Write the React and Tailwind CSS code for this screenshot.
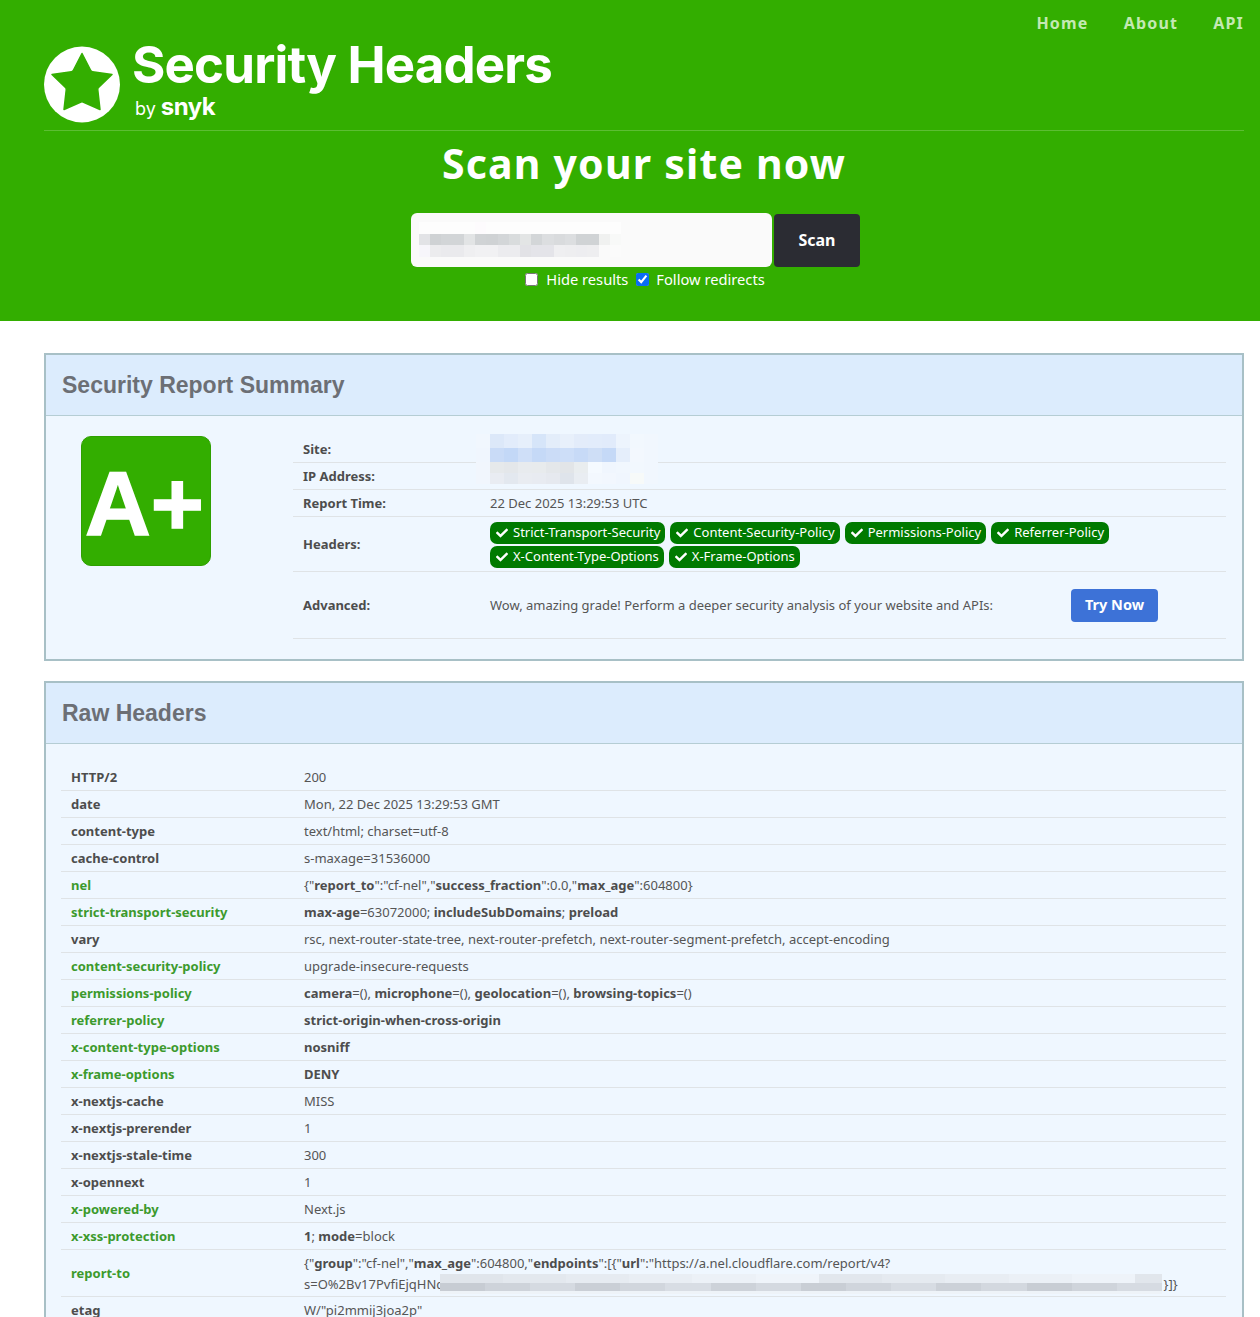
import { FaCheck } from "react-icons/fa";

const noto = "font-['Noto_Sans','Liberation_Sans',sans-serif]";

const badges = [
  "Strict-Transport-Security",
  "Content-Security-Policy",
  "Permissions-Policy",
  "Referrer-Policy",
  "X-Content-Type-Options",
  "X-Frame-Options",
];

// pixelated blur blocks over redacted values
const inputBlur = [
  ["#fdfdfd", "#fdfdfd", "#fdfdfd", "#fdfdfd", "#fdfdfd", "#fdfbfd", "#fdfdfd", "#fdfdfd", "#fdfdfd", "#fdfdfd", "#fdfdfd", "#fdfdfd", "#fdfdfd", "#fdfdfd", "#fdfdfd", "#fdfdfd", "#fdfdfd", "#fdfdfd"],
  ["#e2e3e6", "#cfd2d4", "#d2d5d7", "#d2d5d7", "#e2e4e5", "#d0d3d5", "#cfd2d4", "#d3d6d8", "#d9dcdd", "#e3e5e5", "#d3d6d8", "#dcdee0", "#d9dbdd", "#dcdee0", "#d0d3d5", "#d0d3d5", "#f0f1f0", "#f8f9f8"],
  ["#f7f6fb", "#ececee", "#eaeaed", "#eaeaed", "#efeff1", "#f1f1f3", "#f1f1f3", "#ececef", "#ececef", "#e2e2e6", "#e4e4e9", "#e4e4e9", "#efeff1", "#eeeef0", "#ededf0", "#eeeef0", "#fafafa", "#fbfbfb"],
];

const siteBlur = [
  ["#f1f7fe", "#dce8f9", "#e2ecfb", "#e6effb", "#d6e5f9", "#e3edfa", "#e8f0fb", "#e3ecfa", "#e2ecfb", "#e1ebfb", "#edf4fd", "#f2f8fe", "#f1f7fe"],
  ["#f0f6fe", "#c9dbf7", "#c3d8f7", "#cfdff8", "#c5d9f7", "#cbdcf7", "#cddef8", "#c7daf7", "#cedef6", "#c5d9f7", "#e5eefb", "#f3f8fe", "#f1f7fe"],
  ["#f1f6fd", "#e6e9eb", "#e4e7ea", "#e8ebee", "#e8ebed", "#e4e7ea", "#e2e5e8", "#e9edef", "#f5faff", "#f0f6fe", "#f1f7fe", "#f2f8fe", "#f1f7fe"],
  ["#f1f6fd", "#e9ecf2", "#e3e8ef", "#e9ecf1", "#e8ebf1", "#e6e9ef", "#dfe4eb", "#e9edf2", "#f3f8fe", "#f2f7fe", "#f0f6fe", "#f7faf9", "#f1f7fe"],
];

// long blurred token in report-to, 9px blocks
const reportBlur = Array.from({ length: 80 }, (_, i) => {
  const a = (i * 37 + (i % 7) * 11) % 16;
  const b = (i * 23 + (i % 5) * 13) % 18;
  return [
    `rgb(${224 + a}, ${229 + a}, ${235 + a})`,
    `rgb(${199 + b}, ${204 + b}, ${211 + b})`,
    "rgb(238, 243, 248)",
  ];
});

const B = ({ children }) => <b className="font-bold text-[#4d4d4d]">{children}</b>;

const rawHeaders = [
  ["HTTP/2", "200"],
  ["date", "Mon, 22 Dec 2025 13:29:53 GMT"],
  ["content-type", "text/html; charset=utf-8"],
  ["cache-control", "s-maxage=31536000"],
  ["nel", <>{'{"'}<B>report_to</B>{'":"cf-nel","'}<B>success_fraction</B>{'":0.0,"'}<B>max_age</B>{'":604800}'}</>, true],
  ["strict-transport-security", <><B>max-age</B>=63072000; <B>includeSubDomains</B>; <B>preload</B></>, true],
  ["vary", "rsc, next-router-state-tree, next-router-prefetch, next-router-segment-prefetch, accept-encoding"],
  ["content-security-policy", "upgrade-insecure-requests", true],
  ["permissions-policy", <><B>camera</B>=(), <B>microphone</B>=(), <B>geolocation</B>=(), <B>browsing-topics</B>=()</>, true],
  ["referrer-policy", <B>strict-origin-when-cross-origin</B>, true],
  ["x-content-type-options", <B>nosniff</B>, true],
  ["x-frame-options", <B>DENY</B>, true],
  ["x-nextjs-cache", "MISS"],
  ["x-nextjs-prerender", "1"],
  ["x-nextjs-stale-time", "300"],
  ["x-opennext", "1"],
  ["x-powered-by", "Next.js", true],
  ["x-xss-protection", <><B>1</B>; <B>mode</B>=block</>, true],
];

const Pixels = ({ rows, heights, className }) => (
  <div className={className}>
    {rows.map((row, i) => (
      <div key={i} className="flex flex-1" style={heights ? { flexGrow: heights[i] } : undefined}>
        {row.map((c, j) => (
          <div key={j} className="flex-1" style={{ backgroundColor: c }} />
        ))}
      </div>
    ))}
  </div>
);

const Panel = ({ title, children }) => (
  <section className="border-2 border-[#a8c0c6] bg-[#eff7ff]">
    <h2 className="h-[61px] bg-[#dcecfd] border-b border-[#b5cdd4] pl-4 flex items-center text-[23px] font-bold text-[#6c6f75] font-['Liberation_Sans',sans-serif]">
      {title}
    </h2>
    {children}
  </section>
);

const SummaryRow = ({ label, children, className = "h-[27px]" }) => (
  <div className={`flex items-center pt-[2px] border-b border-[#dfe3e6] ${className}`}>
    <div className="w-[197px] pl-[10px] font-bold text-[#4d4d4d]">{label}</div>
    <div className="flex-1">{children}</div>
  </div>
);

const HeaderRow = ({ name, ok, className = "h-[27px] pt-[2px]", children }) => (
  <div className={`flex items-center border-b border-[#dfe3e6] ${className}`}>
    <div className={`w-[243px] pl-[10px] font-bold ${ok ? "text-[#3c9a2d]" : "text-[#4d4d4d]"}`}>{name}</div>
    <div className="flex-1">{children}</div>
  </div>
);

export default function App() {
  return (
    <div className={`${noto} bg-white text-[13px] text-[#555] h-[1317px] overflow-hidden`}>
      <header className="h-[321px] bg-[#33ae00] pl-[44px] pr-[16px] relative">
        <nav className="absolute top-[11px] right-[16px] flex gap-[35px] text-[16px] font-bold tracking-[1.2px] text-[#c4e9b3]">
          <span>Home</span>
          <span>About</span>
          <span>API</span>
        </nav>
        <div className="h-[131px] border-b border-[#5cbe33] flex items-start pt-[46px]">
          <svg viewBox="0 0 76 76" className="w-[76px] h-[77px]">
            <circle cx="38" cy="38" r="38" fill="#fff" />
            <path
              d="M38 7 L46.500 23.500 Q47 25 48.500 25.200 L68 28 L54.500 41 Q53.500 42 53.800 43.500 L56 63 L39 55.500 Q38 55 37 55.500 L20 63 L22.200 43.500 Q22.500 42 21.500 41 L8 28 L27.500 25.200 Q29 25 29.500 23.500 Z"
              fill="#33ae00"
              stroke="#33ae00"
              strokeWidth="1.500"
              strokeLinejoin="round"
            />
          </svg>
          <div className="ml-[12px] -mt-[9px] text-white font-['Inter',sans-serif]">
            <div className="text-[51px] leading-[56px] font-bold tracking-[-0.85px] whitespace-nowrap">Security Headers</div>
            <div className="flex items-baseline gap-[5px] mt-[2px] ml-[3px]">
              <span className="text-[18px] leading-[24px]">by</span>
              <span className="text-[24px] leading-[24px] font-bold tracking-[-0.5px]">snyk</span>
            </div>
          </div>
        </div>
        <h1 className="text-[41px] leading-[54px] mt-[5px] text-center font-bold tracking-[1.2px] text-white">Scan your site now</h1>
        <div className="flex justify-center mt-[23px] pr-[17px]">
          <div className="w-[361px] h-[54px] bg-[#fafafa] rounded-[6px] pl-[8px] pt-[9px]">
            <Pixels rows={inputBlur} className="w-[202px] h-[35px] flex flex-col" />
          </div>
          <button className="ml-[2px] mt-[1px] pb-[2px] w-[86px] h-[53px] bg-[#2b2c33] rounded-[4px] text-white text-[16px] font-bold">Scan</button>
        </div>
        <div className="flex justify-center items-center mt-[1px] h-[22px] pl-[2px] text-[14.700px] text-white">
          <input type="checkbox" readOnly className="w-[13px] h-[13px] mr-[7px]" />
          <span className="ml-[1px]">Hide results</span>
          <input type="checkbox" readOnly checked className="w-[13px] h-[13px] ml-[8px] mr-[6px] accent-[#0a6cf5]" />
          <span className="ml-[1px]">Follow redirects</span>
        </div>
      </header>

      <main className="pl-[44px] pt-[32px] pr-[16px] flex flex-col gap-[20px]">
        <Panel title="Security Report Summary">
          <div className="flex h-[243px] pr-[16px]">
            <div className="w-[247px] pl-[35px] pt-[20px]">
              <div className="w-[130px] h-[130px] rounded-[10px] bg-[#33ae00] border border-[#2fa000] flex items-center justify-center pt-[5px] pr-[3px] text-white text-[91px] font-bold font-['Liberation_Sans',sans-serif] leading-none [-webkit-text-stroke:1.5px_#fff]">
                A+
              </div>
            </div>
            <div className="flex-1 pt-[20px] relative">
              <SummaryRow label="Site:" />
              <SummaryRow label="IP Address:" />
              <SummaryRow label="Report Time:">22 Dec 2025 13:29:53 UTC</SummaryRow>
              <SummaryRow label="Headers:" className="h-[55px]">
                <div className="flex flex-wrap gap-x-[5px] gap-y-[2px] -mt-[1px]">
                  {badges.map((b) => (
                    <span key={b} className="h-[22px] pl-[6px] pr-[5px] rounded-[7px] bg-[#007a00] text-white text-[13px] flex items-center whitespace-nowrap">
                      <FaCheck size={12} className="mr-[5px]" />
                      {b}
                    </span>
                  ))}
                </div>
              </SummaryRow>
              <SummaryRow label="Advanced:" className="h-[67px]">
                <div className="flex items-center">
                  <span className="w-[581px]">Wow, amazing grade! Perform a deeper security analysis of your website and APIs:</span>
                  <button className="w-[87px] h-[33px] -mt-[2px] rounded-[4px] bg-[#3d72d7] text-white text-[14.500px] font-bold">Try Now</button>
                </div>
              </SummaryRow>
              <Pixels rows={siteBlur} heights={[14, 14, 11, 11]} className="absolute left-[183px] top-[18px] w-[182px] h-[50px] flex flex-col" />
            </div>
          </div>
        </Panel>

        <Panel title="Raw Headers">
          <div className="pl-[15px] pr-[16px] pt-[20px] pb-[20px]">
            {rawHeaders.map(([name, value, ok]) => (
              <HeaderRow key={name} name={name} ok={ok}>{value}</HeaderRow>
            ))}
            <HeaderRow name="report-to" ok className="h-[47px] pt-[1px]">
              <div className="leading-[21px]">
                <div>
                  {'{"'}<B>group</B>{'":"cf-nel","'}<B>max_age</B>{'":604800,"'}<B>endpoints</B>{'":[{"'}<B>url</B>{'":"https://a.nel.cloudflare.com/report/v4?'}
                </div>
                <div className="flex items-center">
                  s=O%2Bv17PvfiEjqHNc
                  <div className="flex w-[722px] h-[20px] shrink-0 ml-[-3px]">
                    {reportBlur.map((col, i) => (
                      <div key={i} className="flex-1 flex flex-col">
                        <div className="h-[9px]" style={{ backgroundColor: col[0] }} />
                        <div className="h-[8px]" style={{ backgroundColor: col[1] }} />
                        <div className="h-[3px]" style={{ backgroundColor: col[2] }} />
                      </div>
                    ))}
                  </div>
                  <span className="ml-[2px]">{'}]}'}</span>
                </div>
              </div>
            </HeaderRow>
            <HeaderRow name="etag">W/"pi2mmij3joa2p"</HeaderRow>
          </div>
        </Panel>
      </main>
    </div>
  );
}
